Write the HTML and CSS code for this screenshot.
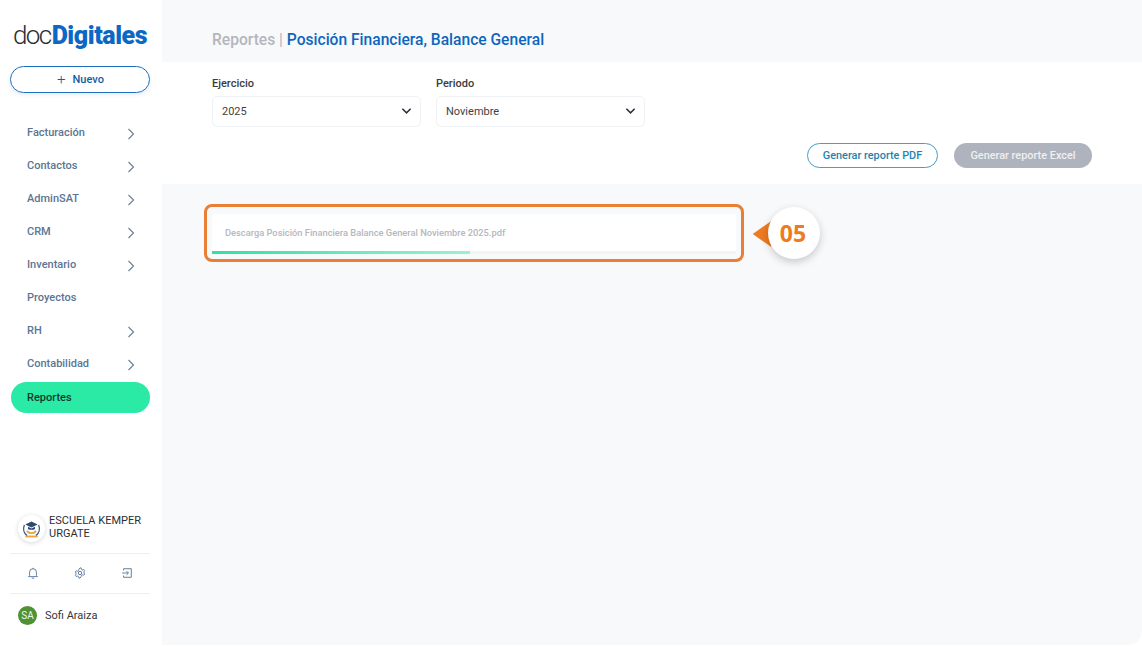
FILE: index.html
```html
<!DOCTYPE html>
<html lang="es">
<head>
<meta charset="utf-8">
<title>Reportes</title>
<link rel="stylesheet" href="styles.css">
</head>
<body>
<div class="app">
  <aside class="sidebar">
    <div class="logo"><span class="logo-doc">doc</span><span class="logo-dig">Digitales</span></div>
    <button class="new-btn"><span class="plus">+</span>Nuevo</button>
    <nav class="nav">
      <a class="nav-item">Facturación<svg class="chev" viewBox="0 0 8 12"><path d="M1.5 1l5 5-5 5"/></svg></a>
      <a class="nav-item">Contactos<svg class="chev" viewBox="0 0 8 12"><path d="M1.5 1l5 5-5 5"/></svg></a>
      <a class="nav-item">AdminSAT<svg class="chev" viewBox="0 0 8 12"><path d="M1.5 1l5 5-5 5"/></svg></a>
      <a class="nav-item">CRM<svg class="chev" viewBox="0 0 8 12"><path d="M1.5 1l5 5-5 5"/></svg></a>
      <a class="nav-item">Inventario<svg class="chev" viewBox="0 0 8 12"><path d="M1.5 1l5 5-5 5"/></svg></a>
      <a class="nav-item">Proyectos</a>
      <a class="nav-item">RH<svg class="chev" viewBox="0 0 8 12"><path d="M1.5 1l5 5-5 5"/></svg></a>
      <a class="nav-item">Contabilidad<svg class="chev" viewBox="0 0 8 12"><path d="M1.5 1l5 5-5 5"/></svg></a>
      <a class="nav-item active">Reportes</a>
    </nav>
    <div class="side-foot">
      <div class="company">
        <div class="company-logo">
          <svg viewBox="0 0 26 26">
            <path d="M5 9a10 10 0 0 0 3 12" fill="none" stroke="#3d5f8f" stroke-width="1.6"/>
            <path d="M21 9a10 10 0 0 1-3 12" fill="none" stroke="#3d5f8f" stroke-width="1.6"/>
            <path d="M13 5l7 3.5-7 3.5-7-3.5z" fill="#2a4a78"/>
            <path d="M9 11v2.5c2 1.4 6 1.4 8 0V11l-4 2z" fill="#2a4a78"/>
            <path d="M8 15.5c2 3.6 8 3.6 10 0" fill="none" stroke="#eca63a" stroke-width="2.2"/>
            <rect x="6" y="21" width="14" height="2" fill="#eca63a"/>
          </svg>
        </div>
        <div class="company-name">ESCUELA KEMPER URGATE</div>
      </div>
      <div class="tools">
        <svg class="tool" viewBox="0 0 14 14"><path d="M3 10V6a4 4 0 0 1 8 0v4l1.2 1.2H1.8z"/><path d="M5.6 13h2.8M7 2V1"/></svg>
        <svg class="tool" viewBox="0 0 14 14"><path d="M7 1l1.3.2.4 1.5 1.3.7 1.5-.4.9 1.1-.7 1.4v1.5l.7 1.4-.9 1.1-1.5-.4-1.3.7-.4 1.5L7 13l-1.3-.2-.4-1.5-1.3-.7-1.5.4-.9-1.1.7-1.4V7l-.7-1.4.9-1.1 1.5.4 1.3-.7.4-1.5z"/><circle cx="7" cy="7" r="2"/></svg>
        <svg class="tool" viewBox="0 0 14 14"><path d="M3 4V2h9v10H3v-2"/><path d="M1.5 7h7M6.5 4.8L8.7 7l-2.2 2.2"/></svg>
      </div>
      <div class="user"><span class="avatar">SA</span><span class="user-name">Sofi Araiza</span></div>
    </div>
  </aside>
  <main class="main">
    <h1 class="title"><span class="crumb">Reportes</span><span class="sep"> | </span>Posición Financiera, Balance General</h1>
    <section class="filters">
      <div class="fields">
        <div class="field">
          <div class="label">Ejercicio</div>
          <div class="select">2025<svg class="select-chev" viewBox="0 0 12 8"><path d="M1.5 1.5L6 6l4.5-4.5"/></svg></div>
        </div>
        <div class="field">
          <div class="label">Periodo</div>
          <div class="select">Noviembre<svg class="select-chev" viewBox="0 0 12 8"><path d="M1.5 1.5L6 6l4.5-4.5"/></svg></div>
        </div>
      </div>
      <div class="actions">
        <button class="btn btn-outline">Generar reporte PDF</button>
        <button class="btn btn-disabled">Generar reporte Excel</button>
      </div>
    </section>
    <section class="results">
      <div class="download-wrap">
        <div class="download">
          <div class="download-name">Descarga Posición Financiera Balance General Noviembre 2025.pdf</div>
          <div class="track"><div class="bar"></div></div>
        </div>
        <div class="callout">
          <svg class="callout-arrow" viewBox="0 0 20 28"><path d="M0 14L20 0v28z"/></svg>
          <div class="callout-num">05</div>
        </div>
      </div>
    </section>
  </main>
</div>
</body>
</html>
```

FILE: styles.css
```css
*, *::before, *::after { box-sizing: border-box; }
html, body { margin: 0; height: 100%; }
body { width: 1142px; height: 646px; overflow: hidden; background: #fff; font-family: Roboto, "Liberation Sans", sans-serif; color: #333; }
.app { display: flex; height: 646px; }

.sidebar { width: 162px; flex: none; display: flex; flex-direction: column; padding: 0 12px 0 10px; background: #fff; }
.logo { height: 66px; padding: 17px 0 0 3px; line-height: 36px; white-space: nowrap; }
.logo-doc { font-size: 26px; font-weight: 300; color: #2b2d33; letter-spacing: -1.6px; }
.logo-dig { font-size: 25px; font-weight: 900; color: #0b68c4; letter-spacing: -0.45px; margin-left: 1px; }
.new-btn { height: 27px; width: 140px; display: flex; align-items: center; justify-content: center; gap: 7px; background: #fff; border: 1px solid #1f6fbe; border-radius: 14px; box-shadow: 0 2px 4px rgba(30,100,180,.12); color: #0f5ea8; font: 500 11px Roboto, sans-serif; padding: 0 0 0 1px; }
.plus { font-size: 15px; font-weight: 300; line-height: 14px; margin-top: -1px; }
.nav { display: flex; flex-direction: column; margin-top: 23px; }
.nav-item { height: 33px; display: flex; align-items: center; justify-content: space-between; padding: 0 15px 0 17px; color: #5c7593; font-size: 11px; font-weight: 500; }
.nav-item.active { height: 31px; margin: 2px 0 0 1px; width: 139px; padding-left: 16px; background: #2aeaa6; border-radius: 16px; color: #14382c; }
.chev { width: 8px; height: 12px; fill: none; stroke: #6d8199; stroke-width: 1.2; margin-top: 2px; }

.side-foot { margin-top: auto; display: flex; flex-direction: column; width: 140px; }
.company { display: flex; align-items: center; gap: 4px; padding: 0 0 6px 8px; height: 43px; }
.company-logo { width: 27px; height: 27px; flex: none; border-radius: 50%; background: #fff; box-shadow: 0 1px 5px rgba(0,0,0,.16); display: flex; align-items: center; justify-content: center; }
.company-logo svg { width: 23px; height: 23px; }
.company-name { font-size: 11px; line-height: 13px; color: #2d2f33; margin-top: -4px; }
.tools { height: 41px; display: flex; align-items: center; justify-content: space-between; padding: 0 17px 2px 17px; border-top: 1px solid #eceef1; border-bottom: 1px solid #eceef1; }
.tool { width: 12px; height: 12px; fill: none; stroke: #4c6c92; stroke-width: 1; }
.user { height: 52px; display: flex; align-items: center; gap: 8px; padding: 0 0 10px 8px; }
.avatar { width: 19px; height: 19px; border-radius: 50%; background: #4f9134; color: #eef6ea; font-size: 10px; display: flex; align-items: center; justify-content: center; }
.user-name { font-size: 11px; color: #33363a; }

.main { flex: 1; min-width: 0; display: flex; flex-direction: column; background: #f8f9fb; border-radius: 0 0 14px 0; margin-bottom: 1px; }
.title { margin: 0; height: 62px; padding: 31px 0 0 50px; font-size: 15.6px; line-height: 18px; font-weight: 500; color: #0d66bd; white-space: nowrap; }
.crumb { color: #b3b6bb; }
.sep { color: #b3b6bb; font-weight: 400; }

.filters { height: 122px; background: #fff; padding: 15px 50px 0 50px; display: flex; flex-direction: column; }
.fields { display: flex; gap: 15px; }
.field { width: 209px; }
.label { font-size: 11px; font-weight: 500; line-height: 14px; color: #3a3c40; margin-bottom: 5px; }
.select { height: 31px; border: 1px solid #f0f1f4; border-radius: 5px; background: #fff; padding: 0 8px 1px 9px; display: flex; align-items: center; justify-content: space-between; font-size: 11px; color: #3d3f43; }
.select-chev { width: 11px; height: 8px; fill: none; stroke: #2f3136; stroke-width: 1.7; }
.actions { display: flex; justify-content: flex-end; gap: 16px; margin-top: 16px; }
.btn { height: 25px; border-radius: 13px; font: 500 10.9px Roboto, sans-serif; padding: 0; }
.btn-outline { width: 131px; background: #fff; border: 1px solid #4a9dc0; color: #1f84ad; }
.btn-disabled { width: 138px; background: #afb3bd; border: 0; color: #eef0f2; }

.results { flex: 1; padding: 30px 0 0 50px; }
.download-wrap { position: relative; width: 524px; }
.download-wrap::before { content: ""; position: absolute; left: -8px; top: -10px; width: 540px; height: 58px; border: 3px solid #e87f35; border-radius: 8px; z-index: 2; }
.download { height: 40px; background: #fff; border-radius: 3px; display: flex; flex-direction: column; }
.download-name { flex: 1; padding: 12px 0 0 13px; font-size: 9.3px; line-height: 13px; font-weight: 500; color: #b4b7c0; white-space: nowrap; }
.track { height: 3px; background: #f3f4f6; }
.bar { width: 258px; height: 100%; background: linear-gradient(90deg, #32e0a0, #9df0cf); }
.callout { position: absolute; left: 540px; top: -7px; display: flex; align-items: center; }
.callout-arrow { width: 20px; height: 26px; fill: #ee7b22; margin-top: 2px; position: relative; z-index: 1; }
.callout-num { width: 52px; height: 52px; margin-left: -4px; padding-right: 2px; border-radius: 50%; background: #fff; box-shadow: 0 3px 8px rgba(0,0,0,.2); color: #ee7b22; font: 700 23px/52px "Open Sans", sans-serif; text-align: center; position: relative; z-index: 2; }
```
